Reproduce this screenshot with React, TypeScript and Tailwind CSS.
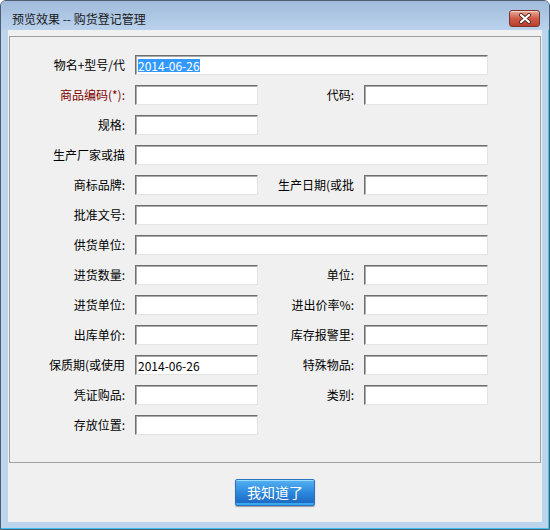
import React from 'react';

const font = { fontFamily: '"Noto Sans CJK SC", "Noto Sans", sans-serif' };

type Field = { label: string; value?: string; selected?: boolean; red?: boolean };
type Row = { left: Field; right?: Field; wide?: boolean };

const rows: Row[] = [
  { left: { label: '物名+型号/代', value: '2014-06-26', selected: true }, wide: true },
  { left: { label: '商品编码(*):', red: true }, right: { label: '代码:' } },
  { left: { label: '规格:' } },
  { left: { label: '生产厂家或描' }, wide: true },
  { left: { label: '商标品牌:' }, right: { label: '生产日期(或批' } },
  { left: { label: '批准文号:' }, wide: true },
  { left: { label: '供货单位:' }, wide: true },
  { left: { label: '进货数量:' }, right: { label: '单位:' } },
  { left: { label: '进货单位:' }, right: { label: '进出价率%:' } },
  { left: { label: '出库单价:' }, right: { label: '库存报警里:' } },
  { left: { label: '保质期(或使用', value: '2014-06-26' }, right: { label: '特殊物品:' } },
  { left: { label: '凭证购品:' }, right: { label: '类别:' } },
  { left: { label: '存放位置:' } },
];

const Box = ({ width, value, selected }: { width: string; value?: string; selected?: boolean }) => (
  <div
    className={`${width} h-[20px] bg-white border border-t-[#6f6f6f] border-l-[#6f6f6f] border-r-[#e3e3e3] border-b-[#e3e3e3] shadow-[inset_1px_1px_0_#a9a9a9] flex items-center pl-[2px] text-[12px] leading-[13px] text-black overflow-hidden whitespace-nowrap`}
  >
    {value &&
      (selected ? <span className="bg-[#3399ff] text-white">{value}</span> : <span>{value}</span>)}
  </div>
);

const CloseButton = () => (
  <div className="mt-[9px] mr-[9px] w-[31px] h-[17px] rounded-[3px] border border-[#7a3328] bg-gradient-to-b from-[#e9a99a] via-[#cf5b47] to-[#b8412f] shadow-[inset_0_1px_0_rgba(255,255,255,0.5)] flex items-center justify-center">
    <svg width="14" height="11" viewBox="0 0 14 11">
      <path d="M3 2 L11 9 M11 2 L3 9" stroke="#5a2a22" strokeWidth="4" strokeLinecap="round" />
      <path d="M3 2 L11 9 M11 2 L3 9" stroke="#ffffff" strokeWidth="2.2" strokeLinecap="round" />
    </svg>
  </div>
);

export default function App() {
  return (
    <div
      className="w-[550px] h-[530px] flex flex-col bg-[#bcd4ec] border border-[#4e5e72] rounded-t-[6px] shadow-[inset_-1px_-1px_0_#38c4ee] overflow-hidden"
      style={font}
    >
      <div className="h-[29px] shrink-0 flex items-start justify-between bg-gradient-to-b from-[#a0bbdb] to-[#bad2ec]">
        <div className="mt-[10px] ml-[11px] text-[12px] leading-[16px] text-[#1a1a1a]">预览效果 -- 购货登记管理</div>
        <CloseButton />
      </div>

      <div className="ml-[7px] w-[534px] h-[492px] bg-[#f0f0f0] flex flex-col">
        <div className="mt-[6px] ml-[1px] w-[532px] h-[427px] border border-[#a0a0a0] pt-[18px] flex flex-col gap-[10px]">
          {rows.map((row, i) => (
            <div key={i} className="h-[20px] flex items-center">
              <div
                className={`w-[115px] text-right text-[12px] whitespace-nowrap overflow-hidden ${
                  row.left.red ? 'text-[#800000]' : 'text-black'
                }`}
              >
                {row.left.label}
              </div>
              <div className="ml-[10px]">
                <Box
                  width={row.wide ? 'w-[353px]' : 'w-[123px]'}
                  value={row.left.value}
                  selected={row.left.selected}
                />
              </div>
              {row.right && (
                <>
                  <div className="w-[96px] text-right text-[12px] text-black whitespace-nowrap overflow-hidden">
                    {row.right.label}
                  </div>
                  <div className="ml-[10px]">
                    <Box width="w-[124px]" />
                  </div>
                </>
              )}
            </div>
          ))}
        </div>

        <button className="self-center mt-[16px] w-[80px] h-[27px] rounded-[2px] border border-[#2a72c0] bg-gradient-to-b from-[#55b2f2] via-[#2d88dc] to-[#1b63bf] shadow-[inset_0_1px_0_#9adcff,inset_0_-2px_0_#3aa8ec,0_1px_1px_rgba(0,0,0,0.35)] text-white text-[14px] leading-[25px]">
          我知道了
        </button>
      </div>
    </div>
  );
}
